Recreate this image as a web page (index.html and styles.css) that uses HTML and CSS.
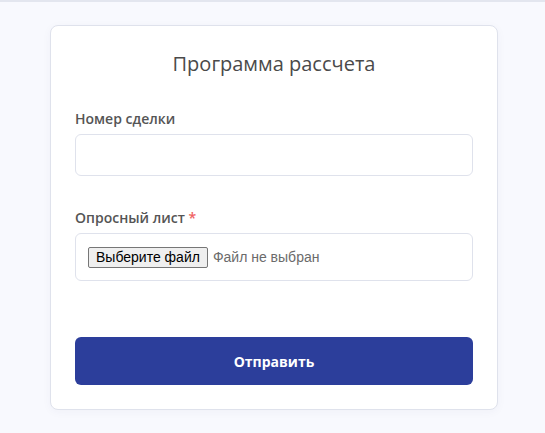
FILE: index.html
```html
<!DOCTYPE html>
<html lang="ru">
<head>
<meta charset="utf-8">
<title>Программа рассчета</title>
<link rel="stylesheet" href="styles.css">
</head>
<body>
<div class="topline"></div>
<main class="card">
  <h1 class="title">Программа рассчета</h1>
  <form class="form">
    <div class="field">
      <label class="label" for="deal">Номер сделки</label>
      <input class="input" id="deal" type="text">
    </div>
    <div class="field">
      <label class="label">Опросный лист <span class="req">*</span></label>
      <div class="filebox">
        <span class="filebtn">Выберите файл</span>
        <span class="filename">Файл не выбран</span>
      </div>
    </div>
    <button class="submit" type="button">Отправить</button>
  </form>
</main>
</body>
</html>
```
FILE: styles.css
```css
html, body {
  margin: 0;
  padding: 0;
}
body {
  background: #f8f9fe;
  font-family: "Open Sans", "Noto Sans", sans-serif;
  min-height: 433px;
}
.topline {
  height: 2px;
  background: #e3e6ef;
}
.card {
  box-sizing: border-box;
  width: 448px;
  margin: 23px 0 0 50px;
  background: #ffffff;
  border: 1px solid #dfe2ec;
  border-radius: 8px;
  box-shadow: 0 2px 10px rgba(40, 50, 100, 0.04);
  padding: 24px 24px 24px;
}
.title {
  margin: 0;
  font-size: 20px;
  line-height: 28px;
  font-weight: 400;
  color: #4a4a4a;
  text-align: center;
}
.form {
  display: flex;
  flex-direction: column;
  margin-top: 31px;
}
.field {
  display: flex;
  flex-direction: column;
  gap: 5px;
  margin-bottom: 32px;
}
.field + .field {
  margin-bottom: 56px;
}
.label {
  font-size: 14px;
  line-height: 20px;
  font-weight: 600;
  color: #555555;
}
.req {
  color: #f06262;
}
.input {
  box-sizing: border-box;
  height: 42px;
  border: 1px solid #dfe2ec;
  border-radius: 6px;
  background: #fff;
  padding: 0 12px;
  font: inherit;
  outline: none;
}
.filebox {
  box-sizing: border-box;
  height: 48px;
  border: 1px solid #dfe2ec;
  border-radius: 6px;
  display: flex;
  align-items: center;
  gap: 5px;
  padding: 0 12px;
  font-family: "Liberation Sans", Arial, sans-serif;
  font-size: 14px;
}
.filebtn {
  box-sizing: border-box;
  height: 21px;
  line-height: 19px;
  padding: 0 7px;
  background: #efefef;
  border: 1px solid #767676;
  border-radius: 2px;
  color: #000;
}
.filename {
  color: #6b6b6b;
}
.submit {
  height: 48px;
  border: none;
  border-radius: 6px;
  background: #2c3e9b;
  color: #ffffff;
  font-family: "Open Sans", "Noto Sans", sans-serif;
  font-size: 14px;
  font-weight: 700;
  cursor: pointer;
}
```
